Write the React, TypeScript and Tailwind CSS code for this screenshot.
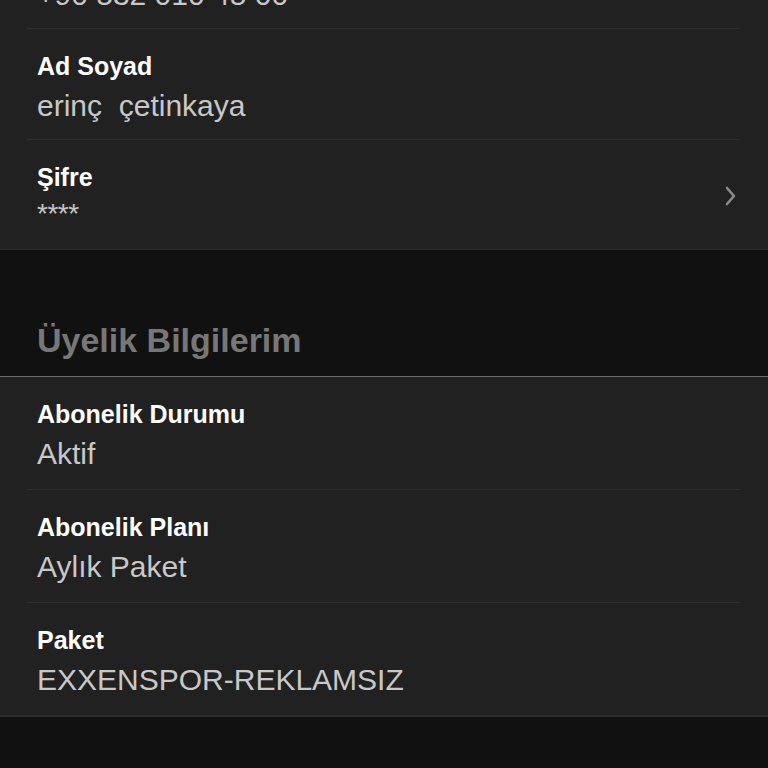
import { ReactNode } from 'react';

const FONT = "font-['Liberation_Sans','Helvetica_Neue',Arial,sans-serif]";

type RowProps = {
  label: string;
  value: ReactNode;
  small?: boolean;
  chevron?: boolean;
  last?: boolean;
  tight?: boolean;
};

function Row({ label, value, small, chevron, last, tight }: RowProps) {
  const pb = small ? 'pb-[26px]' : tight ? 'pb-[15px]' : 'pb-[17px]';
  return (
    <div className="relative">
      <div className={`flex items-center pl-[37px] pr-[30px] pt-[22px] ${pb}`}>
        <div className="flex-1 flex flex-col">
          <span className="h-[30px] leading-[30px] text-[25px] font-semibold text-white">{label}</span>
          {small ? (
            <span className="mt-[7px] h-[24px] leading-[30px] text-[28px] text-[#c4c4c4] tracking-[-0.5px]">{value}</span>
          ) : (
            <span className="mt-[7px] h-[36px] leading-[36px] text-[30px] text-[#c8c8c8]">{value}</span>
          )}
        </div>
        {chevron && (
          <svg width="14" height="22" viewBox="0 0 14 22" className="mt-[6px]">
            <path d="M3 3 L10 11 L3 19" fill="none" stroke="#8c8c8c" strokeWidth="2.6" strokeLinecap="round" strokeLinejoin="round" />
          </svg>
        )}
      </div>
      {!last && <div className="ml-[27px] mr-[28px] h-px bg-[#2e2e2e]" />}
    </div>
  );
}

export default function App() {
  return (
    <div className={`${FONT} w-[768px] h-[768px] overflow-hidden bg-[#111111]`}>
      {/* Kişisel bilgiler kartı */}
      <div className="-mt-[82px] bg-[#212121] border-b border-[#2d2d2d]">
        <Row label="Telefon" value="+90 532 010 45 00" tight />
        <Row label="Ad Soyad" value={<>erinç&nbsp; çetinkaya</>} tight />
        <Row label="Şifre" value="****" small chevron last />
      </div>

      <div className="h-[126px] flex items-end pl-[37px] pb-[16px]">
        <h2 className="h-[40px] leading-[40px] text-[34px] font-bold text-[#777777]">Üyelik Bilgilerim</h2>
      </div>

      <div className="bg-[#212121] border-t border-[#6a6a6a] border-b-2 border-b-[#2c2c2c]">
        <Row label="Abonelik Durumu" value="Aktif" />
        <Row label="Abonelik Planı" value="Aylık Paket" />
        <Row label="Paket" value="EXXENSPOR-REKLAMSIZ" last />
      </div>
    </div>
  );
}
